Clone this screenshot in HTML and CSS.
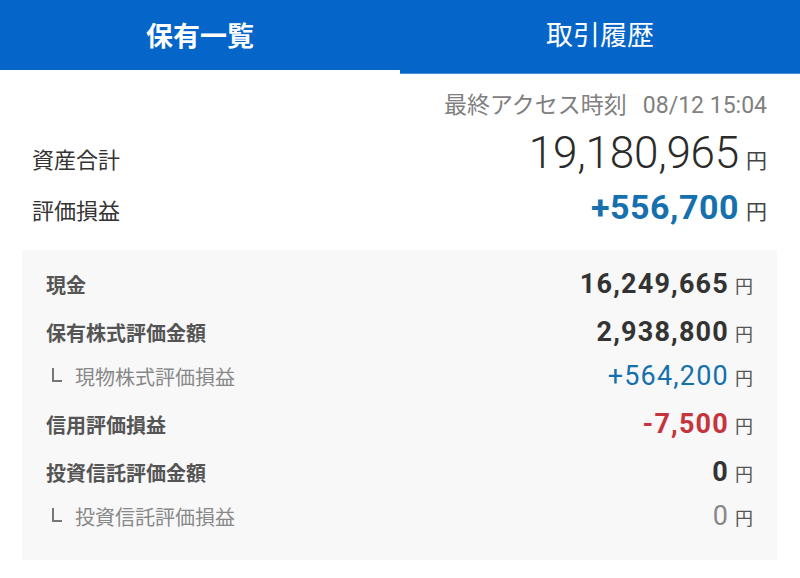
FILE: index.html
```html
<!DOCTYPE html>
<html lang="ja">
<head>
    <meta charset="UTF-8">
    <meta name="viewport" content="width=device-width, initial-scale=1.0">
    <title>保有一覧</title>
    <link rel="stylesheet" href="styles.css">
</head>
<body>
    <nav class="tabs">
        <div class="tab active">保有一覧</div>
        <div class="tab">取引履歴</div>
    </nav>

    <section class="summary">
        <div class="access">最終アクセス時刻<span class="access-time">08/12 15:04</span></div>
        <div class="total-row">
            <span class="total-label">資産合計</span>
            <span class="total-value">19,180,965<span class="yen">円</span></span>
        </div>
        <div class="total-row gain">
            <span class="total-label">評価損益</span>
            <span class="total-value plus">+556,700<span class="yen">円</span></span>
        </div>
    </section>

    <section class="detail">
        <div class="row">
            <span class="label">現金</span>
            <span class="value">16,249,665<span class="yen">円</span></span>
        </div>
        <div class="row">
            <span class="label">保有株式評価金額</span>
            <span class="value">2,938,800<span class="yen">円</span></span>
        </div>
        <div class="row sub">
            <span class="label"><i class="corner"></i>現物株式評価損益</span>
            <span class="value plus">+564,200<span class="yen">円</span></span>
        </div>
        <div class="row">
            <span class="label">信用評価損益</span>
            <span class="value minus">-7,500<span class="yen">円</span></span>
        </div>
        <div class="row">
            <span class="label">投資信託評価金額</span>
            <span class="value">0<span class="yen">円</span></span>
        </div>
        <div class="row sub">
            <span class="label"><i class="corner"></i>投資信託評価損益</span>
            <span class="value">0<span class="yen">円</span></span>
        </div>
    </section>
</body>
</html>
```

FILE: styles.css
```css
body {
    margin: 0;
    font-family: Roboto, "Noto Sans CJK JP", sans-serif;
    background: #fff;
    color: #333;
}
.tabs {
    display: flex;
    height: 74px;
    background: #0565c8;
}
.tab {
    flex: 1;
    display: flex;
    align-items: center;
    justify-content: center;
    padding-bottom: 6px;
    box-sizing: border-box;
    color: #fff;
    font-family: "Noto Sans CJK JP", sans-serif;
    font-size: 27px;
    border-bottom: 1px solid #4d8fd6;
}
.tab.active {
    font-weight: bold;
    box-shadow: inset 0 -4px 0 #fff;
    border-bottom: none;
}

.summary {
    padding: 10px 33px 0 32px;
}
.access {
    text-align: right;
    line-height: 38px;
    font-size: 23px;
    color: #808080;
    font-family: "Noto Sans CJK JP", sans-serif;
}
.access-time {
    font-family: Roboto, sans-serif;
    margin-left: 16px;
}
.total-row {
    display: flex;
    justify-content: space-between;
    align-items: baseline;
    line-height: 56px;
}
.total-label {
    font-family: "Noto Sans CJK JP", sans-serif;
    font-size: 22px;
    color: #333;
}
.total-value {
    font-size: 44px;
    font-weight: 300;
    letter-spacing: -0.2px;
    color: #2b2b2b;
}
.total-row.gain {
    line-height: 44px;
    margin-top: -4px;
}
.total-row.gain .total-value {
    font-size: 34px;
    font-weight: bold;
    letter-spacing: 0.5px;
}
.total-value .yen {
    font-size: 21px;
    font-weight: normal;
    color: #444;
    margin-left: 7px;
    letter-spacing: 0;
}

.detail {
    margin: 16px 23px 0 22px;
    padding: 10px 24px 20px 24px;
    background: #f8f8f8;
}
.row {
    display: flex;
    justify-content: space-between;
    align-items: center;
    height: 48px;
}
.row.sub {
    height: 44px;
    padding-bottom: 4px;
    box-sizing: border-box;
}
.label {
    font-family: "Noto Sans CJK JP", sans-serif;
    font-size: 20px;
    font-weight: bold;
    color: #555;
}
.row.sub .label {
    font-weight: normal;
    color: #888;
}
.corner {
    display: inline-block;
    width: 8px;
    height: 12px;
    margin: 0 13px 3px 6px;
    border-left: 2px solid #777;
    border-bottom: 2px solid #777;
}
.value {
    font-size: 27px;
    font-weight: bold;
    letter-spacing: 1.2px;
    color: #333;
}
.row.sub .value {
    font-weight: normal;
    color: #888;
}
.value .yen {
    font-family: "Noto Sans CJK JP", sans-serif;
    font-size: 18px;
    font-weight: normal;
    color: #555;
    margin-left: 6px;
    letter-spacing: 0;
}
.plus, .row.sub .value.plus {
    color: #1670ae;
}
.minus {
    color: #c4353d;
}
```
